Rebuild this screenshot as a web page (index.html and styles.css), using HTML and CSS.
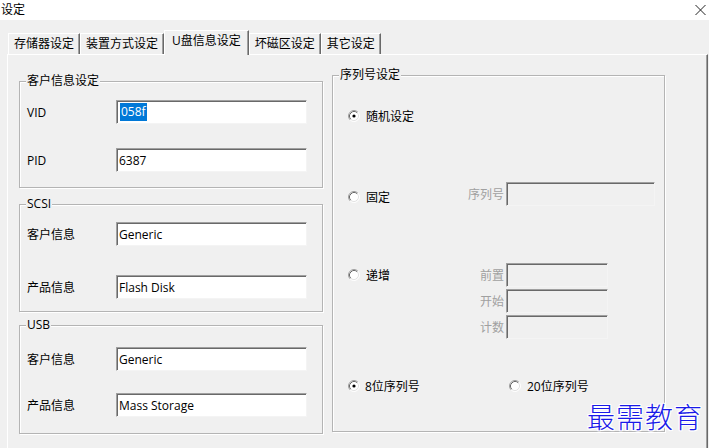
FILE: index.html
```html
<!DOCTYPE html>
<html lang="zh-CN">
<head>
<meta charset="utf-8">
<title>设定</title>
<link rel="stylesheet" href="styles.css">
</head>
<body>
<div class="window">
  <div class="titlebar">
    <span class="title">设定</span>
    <svg class="close" width="11" height="10" viewBox="0 0 11 10"><path d="M0.5 0 L10.5 10 M10.5 0 L0.5 10" stroke="#222" stroke-width="1" fill="none"/></svg>
  </div>
  <div class="body">
    <div class="tabs">
      <div class="tab">存储器设定</div>
      <div class="tab">装置方式设定</div>
      <div class="tab active">U盘信息设定</div>
      <div class="tab">坏磁区设定</div>
      <div class="tab">其它设定</div>
    </div>
    <div class="panel">
      <div class="col-left">
        <div class="group g1">
          <div class="group-title">客户信息设定</div>
          <div class="rows">
            <div class="row"><span class="lbl">VID</span><div class="edit"><span class="sel">058f</span></div></div>
            <div class="row"><span class="lbl">PID</span><div class="edit">6387</div></div>
          </div>
        </div>
        <div class="group g2">
          <div class="group-title">SCSI</div>
          <div class="rows">
            <div class="row"><span class="lbl">客户信息</span><div class="edit">Generic</div></div>
            <div class="row"><span class="lbl">产品信息</span><div class="edit">Flash Disk</div></div>
          </div>
        </div>
        <div class="group g3">
          <div class="group-title">USB</div>
          <div class="rows">
            <div class="row"><span class="lbl">客户信息</span><div class="edit">Generic</div></div>
            <div class="row"><span class="lbl">产品信息</span><div class="edit">Mass Storage</div></div>
          </div>
        </div>
      </div>
      <div class="group col-right">
        <div class="group-title">序列号设定</div>
        <div class="srows">
          <div class="srow">
            <div class="opt"><svg class="radio" width="12" height="12" viewBox="0 0 12 12"><circle cx="6" cy="6" r="5" fill="#fff"/><path d="M2.11 9.89 A5.5 5.5 0 0 1 9.89 2.11" stroke="#a0a0a0" fill="none"/><path d="M9.89 2.11 A5.5 5.5 0 0 1 2.11 9.89" stroke="#ffffff" fill="none"/><path d="M2.82 9.18 A4.5 4.5 0 0 1 9.18 2.82" stroke="#696969" fill="none"/><path d="M9.18 2.82 A4.5 4.5 0 0 1 2.82 9.18" stroke="#e3e3e3" fill="none"/><circle cx="6" cy="6" r="1.6" fill="#000"/></svg>随机设定</div>
          </div>
          <div class="srow gap54">
            <div class="opt nudge"><svg class="radio" width="12" height="12" viewBox="0 0 12 12"><circle cx="6" cy="6" r="5" fill="#fff"/><path d="M2.11 9.89 A5.5 5.5 0 0 1 9.89 2.11" stroke="#a0a0a0" fill="none"/><path d="M9.89 2.11 A5.5 5.5 0 0 1 2.11 9.89" stroke="#ffffff" fill="none"/><path d="M2.82 9.18 A4.5 4.5 0 0 1 9.18 2.82" stroke="#696969" fill="none"/><path d="M9.18 2.82 A4.5 4.5 0 0 1 2.82 9.18" stroke="#e3e3e3" fill="none"/></svg>固定</div>
            <div class="fields">
              <div class="field"><span class="flabel">序列号</span><div class="edit disabled wide"></div></div>
            </div>
          </div>
          <div class="srow gap54">
            <div class="opt"><svg class="radio" width="12" height="12" viewBox="0 0 12 12"><circle cx="6" cy="6" r="5" fill="#fff"/><path d="M2.11 9.89 A5.5 5.5 0 0 1 9.89 2.11" stroke="#a0a0a0" fill="none"/><path d="M9.89 2.11 A5.5 5.5 0 0 1 2.11 9.89" stroke="#ffffff" fill="none"/><path d="M2.82 9.18 A4.5 4.5 0 0 1 9.18 2.82" stroke="#696969" fill="none"/><path d="M9.18 2.82 A4.5 4.5 0 0 1 2.82 9.18" stroke="#e3e3e3" fill="none"/></svg>递增</div>
            <div class="fields">
              <div class="field"><span class="flabel">前置</span><div class="edit disabled narrow"></div></div>
              <div class="field"><span class="flabel">开始</span><div class="edit disabled narrow"></div></div>
              <div class="field"><span class="flabel">计数</span><div class="edit disabled narrow"></div></div>
            </div>
          </div>
          <div class="srow gap35">
            <div class="opt first"><svg class="radio" width="12" height="12" viewBox="0 0 12 12"><circle cx="6" cy="6" r="5" fill="#fff"/><path d="M2.11 9.89 A5.5 5.5 0 0 1 9.89 2.11" stroke="#a0a0a0" fill="none"/><path d="M9.89 2.11 A5.5 5.5 0 0 1 2.11 9.89" stroke="#ffffff" fill="none"/><path d="M2.82 9.18 A4.5 4.5 0 0 1 9.18 2.82" stroke="#696969" fill="none"/><path d="M9.18 2.82 A4.5 4.5 0 0 1 2.82 9.18" stroke="#e3e3e3" fill="none"/><circle cx="6" cy="6" r="1.6" fill="#000"/></svg>8位序列号</div>
            <div class="opt"><svg class="radio" width="12" height="12" viewBox="0 0 12 12"><circle cx="6" cy="6" r="5" fill="#fff"/><path d="M2.11 9.89 A5.5 5.5 0 0 1 9.89 2.11" stroke="#a0a0a0" fill="none"/><path d="M9.89 2.11 A5.5 5.5 0 0 1 2.11 9.89" stroke="#ffffff" fill="none"/><path d="M2.82 9.18 A4.5 4.5 0 0 1 9.18 2.82" stroke="#696969" fill="none"/><path d="M9.18 2.82 A4.5 4.5 0 0 1 2.82 9.18" stroke="#e3e3e3" fill="none"/></svg>20位序列号</div>
          </div>
        </div>
      </div>
    </div>
    <div class="watermark">最需教育</div>
  </div>
</div>
</body>
</html>
```
FILE: styles.css
```css
* { box-sizing: border-box; }
html, body { margin: 0; padding: 0; }
body {
  width: 709px;
  height: 448px;
  overflow: hidden;
  background: #f0f0f0;
  color: #000;
  font-family: "Open Sans", "Noto Sans CJK SC", sans-serif;
  font-size: 12px;
}
.window {
  position: relative;
  width: 709px;
  height: 448px;
  display: flex;
  flex-direction: column;
}
.titlebar {
  height: 20px;
  background: #fff;
  display: flex;
  align-items: center;
  justify-content: space-between;
  padding: 0 3px 0 1px;
}
.title { line-height: 16px; }
.close { display: block; margin-top: -1px; }

.body {
  flex: 1;
  display: flex;
  flex-direction: column;
  padding-top: 10px;
}
.tabs {
  display: flex;
  align-items: flex-end;
  height: 24px;
  padding-left: 8px;
}
.tab {
  height: 21px;
  line-height: 19px;
  padding: 0 5px;
  border-top: 1px solid #fff;
  border-left: 1px solid #fff;
  border-right: 1px solid #696969;
  box-shadow: inset -1px 0 0 #a0a0a0;
  white-space: nowrap;
  background: #f0f0f0;
}
.tab.active {
  height: 25px;
  margin-bottom: -1px;
  padding: 0 7px;
  line-height: 19px;
  position: relative;
  z-index: 1;
}
.panel {
  flex: 1;
  margin: 0 1px 0 7px;
  border-top: 1px solid #fff;
  border-left: 1px solid #fff;
  border-right: 1px solid #696969;
  box-shadow: inset -1px 0 0 #a0a0a0;
  display: flex;
  align-items: flex-start;
  padding-left: 11px;
}
.col-left {
  display: flex;
  flex-direction: column;
  width: 304px;
  margin-top: 26px;
}
.group {
  border: 1px solid #b4b4b4;
  box-shadow: 1px 1px 0 #fff, inset 1px 1px 0 #fff;
}
.group-title {
  line-height: 16px;
  margin: -9px 0 0 6px;
  padding: 0 1px;
  background: #f0f0f0;
  width: fit-content;
}
.rows {
  display: flex;
  flex-direction: column;
  padding-left: 7px;
}
.g1 .rows { padding-top: 11px; gap: 24px; padding-bottom: 15px; }
.g2 { margin-top: 16px; }
.g2 .rows { padding-top: 10px; gap: 29px; padding-bottom: 12px; }
.g3 { margin-top: 13px; }
.g3 .rows { padding-top: 14px; gap: 22px; padding-bottom: 16px; }

.row {
  display: flex;
  align-items: center;
  height: 24px;
}
.lbl { width: 89px; }
.edit {
  width: 191px;
  height: 24px;
  display: flex;
  align-items: center;
  padding: 0 2px;
  background: #fff;
  border: 1px solid;
  border-color: #a0a0a0 #f4f4f4 #f4f4f4 #a0a0a0;
  box-shadow: inset 1px 1px 0 #696969;
  white-space: nowrap;
}
.edit.disabled { background: #f0f0f0; }
.edit.wide { width: 149px; }
.edit.narrow { width: 102px; }
.sel {
  display: inline-block;
  line-height: 18px;
  padding: 0 1px;
  margin-left: 1px;
  background: #0078d7;
  color: #fff;
}

.col-right {
  width: 333px;
  margin: 20px 0 0 9px;
}
.srows {
  display: flex;
  flex-direction: column;
  padding: 21px 0 33px 15px;
}
.srow {
  display: flex;
  align-items: flex-start;
}
.srow.gap54 { margin-top: 54px; }
.srow.gap35 { margin-top: 35px; }
.opt {
  width: 101px;
  height: 24px;
  display: flex;
  align-items: center;
  gap: 6px;
  white-space: nowrap;
}
.opt.nudge { margin-top: 3px; }
.opt.first { width: 161px; gap: 5px; }
.radio { display: block; flex: none; }
.fields {
  display: flex;
  flex-direction: column;
  gap: 2px;
}
.field {
  display: flex;
  align-items: center;
  gap: 2px;
}
.flabel {
  width: 55px;
  text-align: right;
  color: #a0a0a0;
}
.watermark {
  position: absolute;
  left: 587px;
  top: 398px;
  font-family: "Noto Sans CJK SC", sans-serif;
  font-size: 28px;
  font-weight: 300;
  line-height: 36px;
  letter-spacing: 1px;
  color: #1a1ae8;
  text-shadow: 1px 0 0 #fff, -1px 0 0 #fff, 0 1px 0 #fff, 0 -1px 0 #fff, 1px 1px 0 #fff, -1px -1px 0 #fff, 1px -1px 0 #fff, -1px 1px 0 #fff, 0 0 3px #fff;
}
```
